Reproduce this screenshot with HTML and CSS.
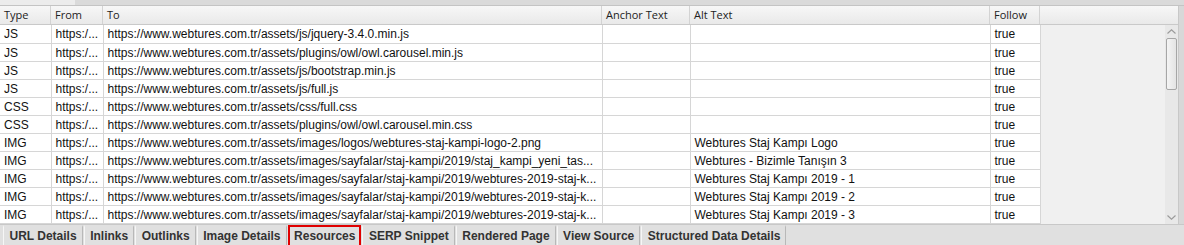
FILE: index.html
```html
<!DOCTYPE html>
<html lang="en">
<head>
    <meta charset="UTF-8">
    <title>Resources</title>
    <link rel="stylesheet" href="styles.css">
</head>
<body>

    <div class="window">
        <!-- Strip above the grid -->
        <div class="top-strip"><div class="top-tab"></div></div>

        <div class="panel">
            <div class="grid">
                <!-- Column headers -->
                <div class="header">
                    <div class="hcell c-type">Type</div>
                    <div class="hcell c-from">From</div>
                    <div class="hcell c-to">To</div>
                    <div class="hcell c-anchor">Anchor Text</div>
                    <div class="hcell c-alt">Alt Text</div>
                    <div class="hcell c-follow">Follow</div>
                    <div class="hcell c-fill"></div>
                </div>

                <div class="body">
                    <table id="resourceTable">
                        <colgroup>
                            <col class="c-type">
                            <col class="c-from">
                            <col class="c-to">
                            <col class="c-anchor">
                            <col class="c-alt">
                            <col class="c-follow">
                        </colgroup>
                        <tbody>
                            <!-- rows inserted by script -->
                        </tbody>
                    </table>
                    <div class="rest"></div>

                    <!-- Vertical scrollbar -->
                    <div class="scrollbar">
                        <div class="arrow">
                            <svg width="9" height="5" viewBox="0 0 9 5"><path d="M0.5 4.5 L4.5 0.8 L8.5 4.5" fill="none" stroke="#9a9a9a" stroke-width="1.1"/></svg>
                        </div>
                        <div class="track"><div class="thumb"></div></div>
                        <div class="arrow">
                            <svg width="9" height="5" viewBox="0 0 9 5"><path d="M0.5 0.5 L4.5 4.2 L8.5 0.5" fill="none" stroke="#9a9a9a" stroke-width="1.1"/></svg>
                        </div>
                    </div>
                </div>
            </div>
            <div class="edge"></div>
        </div>

        <!-- Bottom tabs -->
        <div class="tabs">
            <div class="tab">URL Details</div>
            <div class="tab">Inlinks</div>
            <div class="tab">Outlinks</div>
            <div class="tab">Image Details</div>
            <div class="tab active">Resources</div>
            <div class="tab">SERP Snippet</div>
            <div class="tab">Rendered Page</div>
            <div class="tab">View Source</div>
            <div class="tab">Structured Data Details</div>
        </div>
    </div>

    <script>
        const base = 'https://www.webtures.com.tr/assets/';
        const rows = [
            ['JS', 'js/jquery-3.4.0.min.js', ''],
            ['JS', 'plugins/owl/owl.carousel.min.js', ''],
            ['JS', 'js/bootstrap.min.js', ''],
            ['JS', 'js/full.js', ''],
            ['CSS', 'css/full.css', ''],
            ['CSS', 'plugins/owl/owl.carousel.min.css', ''],
            ['IMG', 'images/logos/webtures-staj-kampi-logo-2.png', 'Webtures Staj Kampı Logo'],
            ['IMG', 'images/sayfalar/staj-kampi/2019/staj_kampi_yeni_tas...', 'Webtures - Bizimle Tanışın 3'],
            ['IMG', 'images/sayfalar/staj-kampi/2019/webtures-2019-staj-k...', 'Webtures Staj Kampı 2019 - 1'],
            ['IMG', 'images/sayfalar/staj-kampi/2019/webtures-2019-staj-k...', 'Webtures Staj Kampı 2019 - 2'],
            ['IMG', 'images/sayfalar/staj-kampi/2019/webtures-2019-staj-k...', 'Webtures Staj Kampı 2019 - 3']
        ];

        const tbody = document.querySelector('#resourceTable tbody');
        rows.forEach(r => {
            const tr = document.createElement('tr');
            tr.innerHTML = `
                <td>${r[0]}</td>
                <td>https:/...</td>
                <td>${base}${r[1]}</td>
                <td></td>
                <td>${r[2]}</td>
                <td>true</td>
            `;
            tbody.appendChild(tr);
        });
    </script>

</body>
</html>
```

FILE: styles.css
```css
* {
    margin: 0;
    padding: 0;
    box-sizing: border-box;
}

body {
    font-family: 'Liberation Sans', Arial, sans-serif;
    font-size: 12px;
    color: #111;
    background-color: #f0f0f0;
}

.window {
    width: 1184px;
    height: 245px;
    display: flex;
    flex-direction: column;
    overflow: hidden;
}

.top-strip {
    height: 7px;
    background-color: #dadada;
    border-bottom: 1px solid #c4c4c4;
}

.top-tab {
    width: 75px;
    height: 5px;
    background-color: #ececec;
}

.panel {
    display: flex;
    height: 218px;
}

.grid {
    width: 1178px;
    display: flex;
    flex-direction: column;
    background-color: #f0f0f0;
}

.edge {
    flex: 1;
    background-color: #d8d8d8;
    border-left: 1px solid #c8c8c8;
}

/* Header */
.header {
    display: flex;
    height: 19px;
    background: linear-gradient(#f7f7f7, #e9e9e9);
    border-bottom: 1px solid #c9c9c9;
}

.hcell {
    font-family: 'Open Sans', 'Noto Sans', sans-serif;
    font-size: 11px;
    line-height: 18px;
    color: #222;
    padding-left: 4px;
    border-right: 1px solid #d3d3d3;
    white-space: nowrap;
    overflow: hidden;
}

.c-type { width: 51px; }
.c-from { width: 52px; }
.c-to { width: 499px; }
.c-anchor { width: 88px; }
.c-alt { width: 300px; }
.c-follow { width: 50px; }
.c-fill { flex: 1; border-right: none; }

/* Body */
.body {
    flex: 1;
    display: flex;
}

table {
    width: 1040px;
    table-layout: fixed;
    border-collapse: collapse;
    background-color: white;
    align-self: flex-start;
}

td {
    height: 18px;
    padding: 1px 0 0 4px;
    border-right: 1px solid #d6d6d6;
    border-bottom: 1px solid #d6d6d6;
    white-space: nowrap;
    overflow: hidden;
    line-height: 16px;
}

.rest {
    flex: 1;
}

/* Scrollbar */
.scrollbar {
    width: 13px;
    display: flex;
    flex-direction: column;
    background-color: #e8e8e8;
}

.arrow {
    height: 12px;
    display: flex;
    align-items: center;
    justify-content: center;
}

.track {
    flex: 1;
    padding: 1px 1px;
}

.thumb {
    height: 52px;
    border: 1px solid #a6a6a6;
    border-radius: 2px;
    background: linear-gradient(90deg, #f4f4f4, #e4e4e4);
}

/* Tabs */
.tabs {
    flex: 1;
    display: flex;
    padding-left: 2px;
    background-color: #e0e0e0;
    border-top: 1px solid #c8c8c8;
}

.tab {
    font-weight: bold;
    color: #333;
    padding: 1px 5px 0 5.5px;
    line-height: 17px;
    border: 2px solid transparent;
    border-left: 1px solid #f6f6f6;
    border-right: 1px solid #b8b8b8;
    margin-left: 1px;
    white-space: nowrap;
}

.tab.active {
    border: 2px solid #e00000;
    padding: 1px 4px 0 4.5px;
}
```
